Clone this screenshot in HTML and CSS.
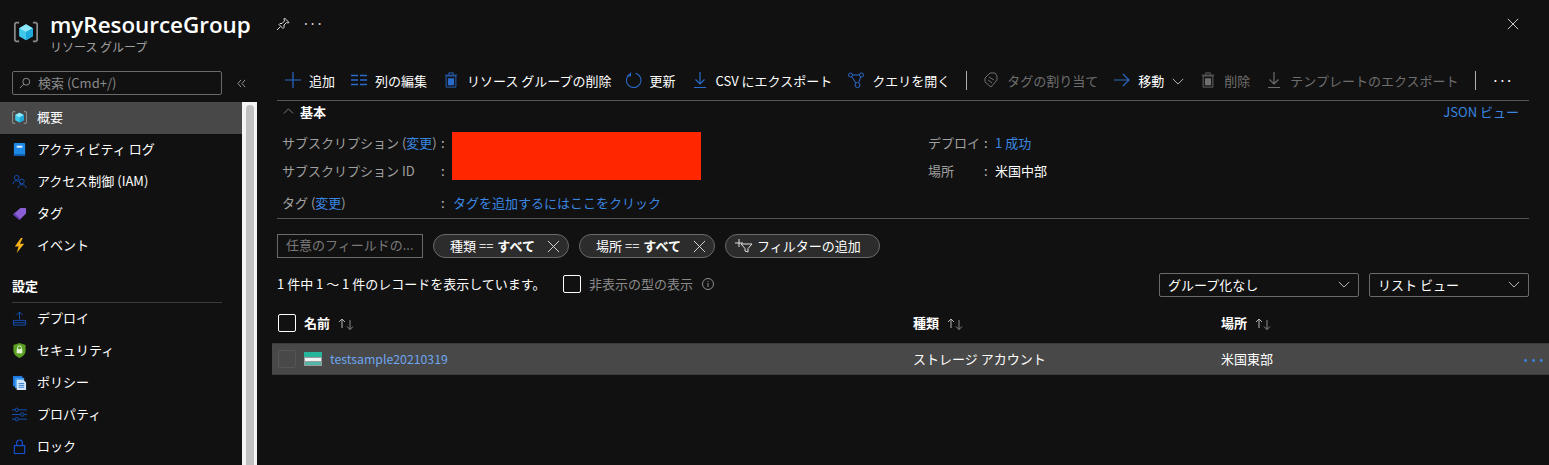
FILE: index.html
```html
<!DOCTYPE html>
<html lang="ja">
<head>
    <meta charset="UTF-8">
    <title>myResourceGroup</title>
    <link rel="stylesheet" href="styles.css">
</head>
<body>

    <svg class="defs" width="0" height="0">
        <symbol id="i-group" viewBox="0 0 28 28">
            <path d="M6 3H2.500L1 4.500v19L2.500 25H6M22 3h3.500L27 4.500v19L25.500 25H22" fill="none" stroke="#8a8a8a" stroke-width="2"/>
            <path d="M14 5l8 4.500v9.500l-8 4.500-8-4.500V9.500z" fill="#3fc8ec"/>
            <path d="M14 5l8 4.500-8 4.500-8-4.500z" fill="#8ce8fa"/>
            <path d="M14 14l8-4.500v9.500l-8 4.500z" fill="#1fa8dc"/>
        </symbol>
        <symbol id="i-trash" viewBox="0 0 16 18">
            <path d="M2.500 4.500h11V17h-11zM1 3.500h14M5.500 3V1h5v2" fill="none" stroke="currentColor"/>
            <rect x="4.500" y="7" width="7" height="8" fill="currentColor"/>
        </symbol>
        <symbol id="i-down" viewBox="0 0 14 16">
            <path d="M7 0v11.500M2.500 7.500L7 12l4.500-4.500M1 15.500h12" fill="none" stroke="currentColor" stroke-width="1.200"/>
        </symbol>
        <symbol id="i-sort" viewBox="0 0 18 14">
            <path d="M5 11V2M2 5l3-3 3 3" fill="none" stroke="#b8b8b8"/>
            <path d="M13 3v9.500M10 9.500l3 3 3-3" fill="none" stroke="#8a8a8a"/>
        </symbol>
        <symbol id="i-x" viewBox="0 0 14 14">
            <path d="M1 1l12 12M13 1L1 13" fill="none" stroke="currentColor"/>
        </symbol>
        <symbol id="i-chev" viewBox="0 0 14 8">
            <path d="M1 1l6 6 6-6" fill="none" stroke="currentColor"/>
        </symbol>
    </svg>

    <!-- title bar -->
    <header class="blade-head">
        <svg class="head-icon"><use href="#i-group"/></svg>
        <div class="head-text">
            <h1>myResourceGroup</h1>
            <p>リソース グループ</p>
        </div>
        <svg class="pin" viewBox="0 0 14 14"><path d="M8.500 1l4.500 4.500-1 .5-1.500-.5-2.500 2.500v2.500l-1 1-4-4 1-1H6l2.500-2.500L8 2zM4.500 9.500L1 13" fill="none" stroke="#d8d8d8"/></svg>
        <span class="head-more">···</span>
        <svg class="close"><use href="#i-x"/></svg>
    </header>

    <div class="blade">
        <!-- left menu -->
        <nav class="side">
            <div class="side-menu">
                <div class="side-search">
                    <div class="search-box">
                        <svg viewBox="0 0 14 14"><circle cx="8.500" cy="5.500" r="4" fill="none" stroke="#a0a0a0"/><path d="M5.500 8.500L1 13" stroke="#a0a0a0"/></svg>
                        <span>検索 (Cmd+/)</span>
                    </div>
                    <svg class="collapse" viewBox="0 0 10 10"><path d="M4.500 1L1 5l3.500 4M9 1L5.500 5 9 9" fill="none" stroke="#a0a0a0"/></svg>
                </div>
                <a class="side-item active"><svg class="side-icon"><use href="#i-group"/></svg>概要</a>
                <a class="side-item">
                    <svg class="side-icon" viewBox="0 0 16 16"><rect x="2" y="1" width="12" height="14" rx="1" fill="#1e88e5"/><rect x="5" y="4" width="6" height="2" fill="#e8f4ff"/><rect x="2" y="13" width="12" height="2" fill="#1259a8"/></svg>
                    アクティビティ ログ
                </a>
                <a class="side-item">
                    <svg class="side-icon" viewBox="0 0 16 16"><g fill="none" stroke="#1452b8"><circle cx="5" cy="4" r="2.500"/><path d="M1 11c0-5 8-5 8 0"/><circle cx="10.500" cy="8" r="2.500"/><path d="M6.500 15c0-5 8.500-5 8.500 0"/></g></svg>
                    アクセス制御 (IAM)
                </a>
                <a class="side-item">
                    <svg class="side-icon" viewBox="0 0 16 16"><path d="M1 9l8-7h6v6l-7 7z" fill="#8a5fd6"/><path d="M1 9l7 6 1-1-6-6z" fill="#5b3aa8"/></svg>
                    タグ
                </a>
                <a class="side-item">
                    <svg class="side-icon" viewBox="0 0 16 16"><path d="M9.500 0L3 9h4l-2 7 8-10H8.500L11.500 0z" fill="#f5b21a"/></svg>
                    イベント
                </a>
                <div class="side-title">設定</div>
                <a class="side-item">
                    <svg class="side-icon" viewBox="0 0 16 16"><path d="M8 9V1M4.500 4.500L8 1l3.500 3.500M1.500 10h13v5h-13zM1.500 12.500h13" fill="none" stroke="#1452b8"/></svg>
                    デプロイ
                </a>
                <a class="side-item">
                    <svg class="side-icon" viewBox="0 0 16 16"><path d="M8 0l6.500 2v6c0 4-3 6.500-6.500 8-3.500-1.500-6.500-4-6.500-8V2z" fill="#5a9e22"/><rect x="5" y="6.500" width="6" height="4.500" fill="#e8f4d8"/><path d="M6 6.500V5a2 2 0 014 0v1.500" fill="none" stroke="#e8f4d8"/></svg>
                    セキュリティ
                </a>
                <a class="side-item">
                    <svg class="side-icon" viewBox="0 0 16 16"><rect x="1" y="1" width="10" height="11" fill="#1e78e0"/><rect x="3" y="3" width="10" height="11" fill="#3a9af0"/><path d="M5 5h7l3 3v8H5z" fill="#d4e8fc"/><path d="M7 9h6M7 11h6M7 13h6" stroke="#2a78d0"/></svg>
                    ポリシー
                </a>
                <a class="side-item">
                    <svg class="side-icon" viewBox="0 0 16 16"><g fill="none" stroke="#1452b8"><path d="M0 3h3.500M7 3h9M0 8h9.500M13 8h3M0 13h3.500M7 13h9"/><circle cx="5" cy="3" r="1.800"/><circle cx="11" cy="8" r="1.800"/><circle cx="5" cy="13" r="1.800"/></g></svg>
                    プロパティ
                </a>
                <a class="side-item">
                    <svg class="side-icon" viewBox="0 0 16 16"><path d="M2.500 7h11v8.500h-11zM5 7V4a3 3 0 016 0v3" fill="none" stroke="#1452d8" stroke-width="1.200"/></svg>
                    ロック
                </a>
            </div>
            <div class="scrollbar"><div class="scroll-thumb"></div></div>
        </nav>

        <main class="content">
            <!-- command bar -->
            <div class="cmd-bar">
                <button class="cmd">
                    <svg viewBox="0 0 16 16"><path d="M8 0v16M0 8h16" stroke="#2a6ac8" stroke-width="1.200"/></svg>追加
                </button>
                <button class="cmd">
                    <svg viewBox="0 0 16 16"><path d="M0 3.500h7M9 3.500h7M0 8h7M9 8h7M0 12.500h7M9 12.500h7" stroke="#2a6ac8" stroke-width="1.300"/></svg>列の編集
                </button>
                <button class="cmd cmd-blue"><svg><use href="#i-trash"/></svg>リソース グループの削除</button>
                <button class="cmd cmd-refresh">
                    <svg viewBox="0 0 16 16"><path d="M9.500 1.200A7.300 7.300 0 1 1 4.500 1.700M4.500 .5v3.500H1" fill="none" stroke="#2a6ac8" stroke-width="1.100"/></svg>更新
                </button>
                <button class="cmd cmd-blue"><svg><use href="#i-down"/></svg>CSV にエクスポート</button>
                <button class="cmd">
                    <svg viewBox="0 0 16 16"><g fill="none" stroke="#2a6ac8"><circle cx="2.500" cy="3" r="2"/><circle cx="13.500" cy="3" r="2"/><circle cx="9.500" cy="13" r="2.500"/><path d="M4.500 3h7M3.800 4.700l4 6.300M12.700 4.800l-2 5.800"/></g></svg>クエリを開く
                </button>
                <span class="cmd-sep"></span>
                <button class="cmd cmd-off">
                    <svg viewBox="0 0 16 16"><path d="M2 6l5-5h5l2 3v4l-6 7-6-5zM6 5l5 3M5 8l4 3" fill="none" stroke="#6e6e6e"/></svg>タグの割り当て
                </button>
                <button class="cmd">
                    <svg viewBox="0 0 16 14"><path d="M0 7h15M9 1l6 6-6 6" fill="none" stroke="#2a6ac8" stroke-width="1.200"/></svg>移動<svg class="cmd-chev"><use href="#i-chev"/></svg>
                </button>
                <button class="cmd cmd-off"><svg><use href="#i-trash"/></svg>削除</button>
                <button class="cmd cmd-off"><svg><use href="#i-down"/></svg>テンプレートのエクスポート</button>
                <span class="cmd-sep"></span>
                <span class="cmd-more">···</span>
            </div>

            <!-- essentials -->
            <section class="essentials">
                <div class="ess-head">
                    <svg viewBox="0 0 12 7"><path d="M.5 6.500L6 1l5.500 5.500" fill="none" stroke="#8a8a8a"/></svg>
                    <strong>基本</strong>
                    <a class="json-link">JSON ビュー</a>
                </div>
                <div class="ess-body">
                    <div class="ess-left">
                        <span class="ess-label">サブスクリプション (<a>変更</a>)</span><span class="ess-colon">:</span>
                        <div class="redact"></div>
                        <span class="ess-label">サブスクリプション ID</span><span class="ess-colon">:</span>
                        <span class="ess-label">タグ (<a>変更</a>)</span><span class="ess-colon">:</span>
                        <a>タグを追加するにはここをクリック</a>
                    </div>
                    <div class="ess-right">
                        <span class="ess-label">デプロイ</span><span class="ess-colon">:</span><a>1 成功</a>
                        <span class="ess-label">場所</span><span class="ess-colon">:</span><span>米国中部</span>
                    </div>
                </div>
            </section>

            <!-- filters -->
            <div class="filters">
                <div class="filter-input">任意のフィールドの...</div>
                <div class="pill">種類 == <b>すべて</b><svg><use href="#i-x"/></svg></div>
                <div class="pill">場所 == <b>すべて</b><svg><use href="#i-x"/></svg></div>
                <div class="pill pill-add">
                    <svg viewBox="0 0 18 14"><path d="M4 0v8M0 4h8" stroke="#e0e0e0"/><path d="M6 5h11l-4 4.500V13l-3-1V9.500z" fill="none" stroke="#e0e0e0"/></svg>フィルターの追加
                </div>
            </div>

            <div class="list-tools">
                <span class="list-count">1 件中 1 ～ 1 件のレコードを表示しています。</span>
                <span class="check"></span>
                <span class="muted">非表示の型の表示</span>
                <svg class="info" viewBox="0 0 12 12"><circle cx="6" cy="6" r="5.500" fill="none" stroke="#909090"/><path d="M6 5v4M6 3v1" stroke="#909090"/></svg>
                <div class="select select-group">グループ化なし<svg><use href="#i-chev"/></svg></div>
                <div class="select select-view">リスト ビュー<svg><use href="#i-chev"/></svg></div>
            </div>

            <!-- table -->
            <div class="grid-head">
                <span class="check"></span>
                <div class="col-name">名前<svg><use href="#i-sort"/></svg></div>
                <div class="col-type">種類<svg><use href="#i-sort"/></svg></div>
                <div class="col-loc">場所<svg><use href="#i-sort"/></svg></div>
            </div>
            <div class="grid-row">
                <span class="check check-dark"></span>
                <div class="col-name">
                    <svg class="storage" viewBox="0 0 18 14"><rect width="18" height="14" fill="#9a9a9a"/><rect width="18" height="5" fill="#27b49c"/><rect x="1" y="6" width="16" height="3" fill="#eef4f4"/><rect x="1" y="10" width="16" height="3" fill="#4fb8a8"/></svg>
                    <a>testsample20210319</a>
                </div>
                <div class="col-type">ストレージ アカウント</div>
                <div class="col-loc">米国東部</div>
                <span class="row-more">···</span>
            </div>
        </main>
    </div>

</body>
</html>
```

FILE: styles.css
```css
* {
    box-sizing: border-box;
}
html, body {
    height: 100%;
}
body {
    margin: 0;
    background-color: #111111;
    color: #ffffff;
    font-family: "Noto Sans CJK JP", "Noto Sans", sans-serif;
    font-size: 13px;
    overflow: hidden;
}
a {
    color: #3a86e0;
}
.defs {
    position: absolute;
}

/* title bar */
.blade-head {
    display: flex;
    align-items: flex-start;
    height: 64px;
    padding: 20px 30px 0 13px;
}
.head-icon {
    width: 26px;
    height: 24px;
}
.head-text {
    margin-left: 11px;
    margin-top: -9px;
    width: 226px;
}
.head-text h1 {
    margin: 0;
    font-family: "Open Sans", sans-serif;
    font-size: 22.400px;
    font-weight: 600;
    line-height: 28px;
    white-space: nowrap;
}
.head-text p {
    margin: 0;
    color: #a0a0a0;
    font-size: 12px;
    line-height: 16px;
}
.pin {
    width: 14px;
    height: 14px;
    margin-top: -3px;
}
.head-more {
    margin: -9px 0 0 12px;
    font-size: 14px;
    line-height: 24px;
    letter-spacing: -1px;
    color: #d0d0d0;
}
.close {
    width: 12px;
    height: 12px;
    margin: -2px 0 0 auto;
    color: #e8e8e8;
}

.blade {
    display: flex;
    height: 401px;
}

/* left menu */
.side {
    display: flex;
    width: 257px;
    flex: none;
}
.side-menu {
    width: 242px;
    flex: none;
}
.side-search {
    display: flex;
    align-items: center;
    height: 38px;
    padding: 7px 0 7px 12px;
}
.search-box {
    display: flex;
    align-items: center;
    gap: 7px;
    width: 210px;
    flex: none;
    height: 24px;
    padding: 0 0 1px 6px;
    border: 1px solid #6a6a6a;
    border-radius: 2px;
    color: #8a8a8a;
}
.search-box svg {
    width: 12px;
    height: 12px;
}
.collapse {
    width: 9px;
    height: 9px;
    flex: none;
    margin-left: 15px;
}
.side-item {
    display: flex;
    align-items: center;
    gap: 10px;
    height: 32px;
    padding: 0 0 4px 12px;
    color: #ffffff;
}
.side-item.active {
    background-color: #484848;
}
.side-icon {
    width: 15px;
    height: 15px;
    flex: none;
    margin-top: 2px;
}
.side-title {
    margin: 7px 20px 0 12px;
    height: 34px;
    padding-top: 8px;
    border-bottom: 1px solid #3a3a3a;
    font-weight: 700;
    line-height: 18px;
}
.scrollbar {
    width: 15px;
    margin-top: 38px;
    background-color: #f4f4f4;
    padding: 3px 3px 0 4px;
}
.scroll-thumb {
    height: 100%;
    background-color: #c0c0c0;
    border-radius: 4px 4px 0 0;
}

/* main part */
.content {
    flex: 1;
    min-width: 0;
}
.cmd-bar {
    display: flex;
    align-items: center;
    gap: 16px;
    height: 37px;
    margin: 0 20px;
    padding: 0 0 4px 8px;
    border-bottom: 1px solid #555555;
}
.cmd {
    display: flex;
    align-items: center;
    gap: 8px;
    padding: 0;
    border: 0;
    background: none;
    color: #ffffff;
    font-family: inherit;
    font-size: 13px;
    white-space: nowrap;
}
.cmd svg {
    width: 16px;
    height: 16px;
    flex: none;
}
.cmd-blue svg {
    color: #2a6ac8;
}
.cmd-refresh {
    margin-left: -2px;
}
.cmd-off {
    color: #6e6e6e;
}
.cmd .cmd-chev {
    width: 12px;
    height: 7px;
    margin-top: 3px;
    color: #d0d0d0;
}
.cmd-sep {
    width: 1px;
    height: 19px;
    background-color: #b0b0b0;
}
.cmd-more {
    font-size: 14px;
    line-height: 16px;
    letter-spacing: -1px;
}

/* essentials */
.essentials {
    margin: 0 20px;
    height: 118px;
    border-bottom: 1px solid #555555;
}
.ess-head {
    display: flex;
    align-items: center;
    height: 27px;
    padding: 0 10px 7px 6px;
}
.ess-head svg {
    width: 11px;
    height: 6px;
    margin-right: 6px;
}
.json-link {
    margin-left: auto;
}
.ess-body {
    display: flex;
    padding-left: 5px;
}
.ess-left {
    display: grid;
    grid-template-columns: 159px 12px 250px;
    grid-template-rows: 28px 28px 36px;
    align-items: center;
    width: 646px;
}
.ess-right {
    display: grid;
    grid-template-columns: 56px 11px auto;
    grid-template-rows: 28px 28px;
    align-items: center;
}
.ess-label {
    color: #a0a0a0;
    white-space: nowrap;
}
.ess-colon {
    color: #c0c0c0;
}
.redact {
    grid-column: 3;
    grid-row: 1 / span 2;
    width: 249px;
    height: 48px;
    margin-left: -1px;
    background-color: #ff2600;
}
.ess-left > a {
    white-space: nowrap;
}

/* filters */
.filters {
    display: flex;
    gap: 10px;
    margin: 15px 20px 0;
}
.filter-input {
    width: 146px;
    height: 24px;
    padding-left: 8px;
    border: 1px solid #6a6a6a;
    color: #7a7a7a;
    line-height: 20px;
    white-space: nowrap;
    overflow: hidden;
}
.pill {
    display: flex;
    align-items: center;
    gap: 4px;
    width: 136px;
    height: 24px;
    padding: 0 0 2px 16px;
    border: 1px solid #6a6a6a;
    border-radius: 12px;
    background-color: #2c2c2c;
    white-space: nowrap;
}
.pill svg {
    width: 13px;
    height: 13px;
    margin: 2px 0 0 8px;
    color: #e0e0e0;
}
.pill-add {
    width: 155px;
    padding-left: 9px;
}
.pill-add svg {
    width: 18px;
    height: 14px;
    margin: 2px 0 0;
}

.list-tools {
    display: flex;
    align-items: center;
    height: 24px;
    margin: 15px 20px 0;
}
.list-count {
    width: 286px;
    margin-top: -4px;
    white-space: nowrap;
}
.list-tools .check {
    margin-top: -2px;
}
.check {
    display: block;
    flex: none;
    width: 18px;
    height: 18px;
    border: 1px solid #ffffff;
    border-radius: 2px;
}
.check-dark {
    border-color: #555555;
}
.muted {
    margin: -4px 0 0 8px;
    color: #8a8a8a;
}
.info {
    width: 12px;
    height: 12px;
    margin: -2px 0 0 9px;
}
.select {
    display: flex;
    align-items: center;
    justify-content: space-between;
    height: 24px;
    padding: 0 8px 1px 8px;
    border: 1px solid #6a6a6a;
    border-radius: 2px;
}
.select svg {
    width: 12px;
    height: 7px;
    color: #d8d8d8;
}
.select-group {
    width: 200px;
    margin-left: auto;
}
.select-view {
    width: 160px;
    margin-left: 10px;
}

/* table */
.grid-head, .grid-row {
    display: flex;
    align-items: center;
}
.grid-head {
    height: 32px;
    margin-top: 11px;
    padding-left: 21px;
    font-weight: 700;
}
.grid-head .check {
    margin-top: -2px;
}
.grid-head .col-name, .grid-head .col-type, .grid-head .col-loc {
    padding-bottom: 4px;
}
.grid-row {
    height: 32px;
    margin-top: 3px;
    margin-left: 15px;
    padding-left: 6px;
    background-color: #484848;
    border-top: 1px solid #3a3a3a;
    border-bottom: 1px solid #3a3a3a;
}
.grid-row .col-type, .grid-row .col-loc {
    padding-bottom: 2px;
}
.col-name {
    display: flex;
    align-items: center;
    width: 609px;
    margin-left: 8px;
    white-space: nowrap;
}
.col-type {
    display: flex;
    align-items: center;
    width: 308px;
    white-space: nowrap;
}
.col-loc {
    display: flex;
    align-items: center;
    white-space: nowrap;
}
.grid-head svg {
    width: 18px;
    height: 14px;
    margin: 3px 0 0 7px;
}
.storage {
    width: 18px;
    height: 14px;
    margin-right: 8px;
}
.grid-row a {
    color: #6ea6f0;
    font-size: 12.300px;
}
.row-more {
    margin-left: auto;
    padding-right: 4px;
    color: #3a86e0;
    font-size: 15px;
    font-weight: 700;
    line-height: 15px;
    letter-spacing: -1px;
}
```
